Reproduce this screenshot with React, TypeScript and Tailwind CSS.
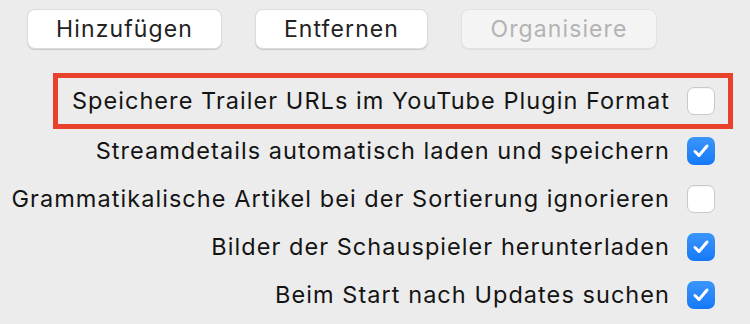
import React from 'react';

const font = { fontFamily: 'Inter, "Noto Sans", sans-serif' };

const Checkbox: React.FC<{ checked: boolean }> = ({ checked }) =>
    checked ? (
        <div className="flex h-[28px] w-[28px] items-center justify-center rounded-[7px] bg-gradient-to-b from-[#3a95fd] to-[#1479f6]">
            <svg width="18" height="16" viewBox="0 0 18 16" fill="none">
                <path d="M3 8.5 L7 12.5 L15 3" stroke="white" strokeWidth="3" strokeLinecap="round" strokeLinejoin="round" />
            </svg>
        </div>
    ) : (
        <div className="h-[28px] w-[28px] rounded-[7px] border border-[#c9c9c9] bg-white shadow-[inset_0_1px_1px_rgba(0,0,0,0.04)]" />
    );

const Row: React.FC<{ label: string; checked: boolean }> = ({ label, checked }) => (
    <div className="flex h-[48px] items-center justify-end gap-[17px]">
        <span className="text-[23.5px] tracking-[1.05px] text-[#141414]">{label}</span>
        <Checkbox checked={checked} />
    </div>
);

export default function App() {
    const rows = [
        { label: 'Streamdetails automatisch laden und speichern', checked: true },
        { label: 'Grammatikalische Artikel bei der Sortierung ignorieren', checked: false },
        { label: 'Bilder der Schauspieler herunterladen', checked: true },
        { label: 'Beim Start nach Updates suchen', checked: true },
    ];

    return (
        <div className="h-[324px] w-[750px] overflow-hidden bg-[#ececec]" style={font}>
            <div className="flex gap-[33px] pl-[27px] pt-[9px]">
                <button className="h-[40px] w-[195px] rounded-[8px] border border-[#dcdcdc] bg-white text-[23px] tracking-[1.1px] text-[#222] shadow-[0_1px_1px_rgba(0,0,0,0.15)]">
                    Hinzufügen
                </button>
                <button className="h-[40px] w-[173px] rounded-[8px] border border-[#dcdcdc] bg-white text-[23px] tracking-[1.1px] text-[#222] shadow-[0_1px_1px_rgba(0,0,0,0.15)]">
                    Entfernen
                </button>
                <button className="h-[40px] w-[196px] rounded-[8px] border border-[#e2e2e2] bg-[#f4f4f4] text-[23px] tracking-[1.1px] text-[#b3b3b3] shadow-[0_1px_1px_rgba(0,0,0,0.06)]" disabled>
                    Organisiere
                </button>
            </div>

            <div className="ml-[53px] mr-[17px] mt-[24px] mb-[-2px] flex h-[56px] items-center justify-end gap-[17px] border-[5px] border-[#e8412c] pr-[13px]">
                <span className="text-[23.5px] tracking-[1.05px] text-[#141414]">Speichere Trailer URLs im YouTube Plugin Format</span>
                <Checkbox checked={false} />
            </div>

            <div className="flex flex-col pr-[35px]">
                {rows.map(r => (
                    <Row key={r.label} label={r.label} checked={r.checked} />
                ))}
            </div>
        </div>
    );
}
